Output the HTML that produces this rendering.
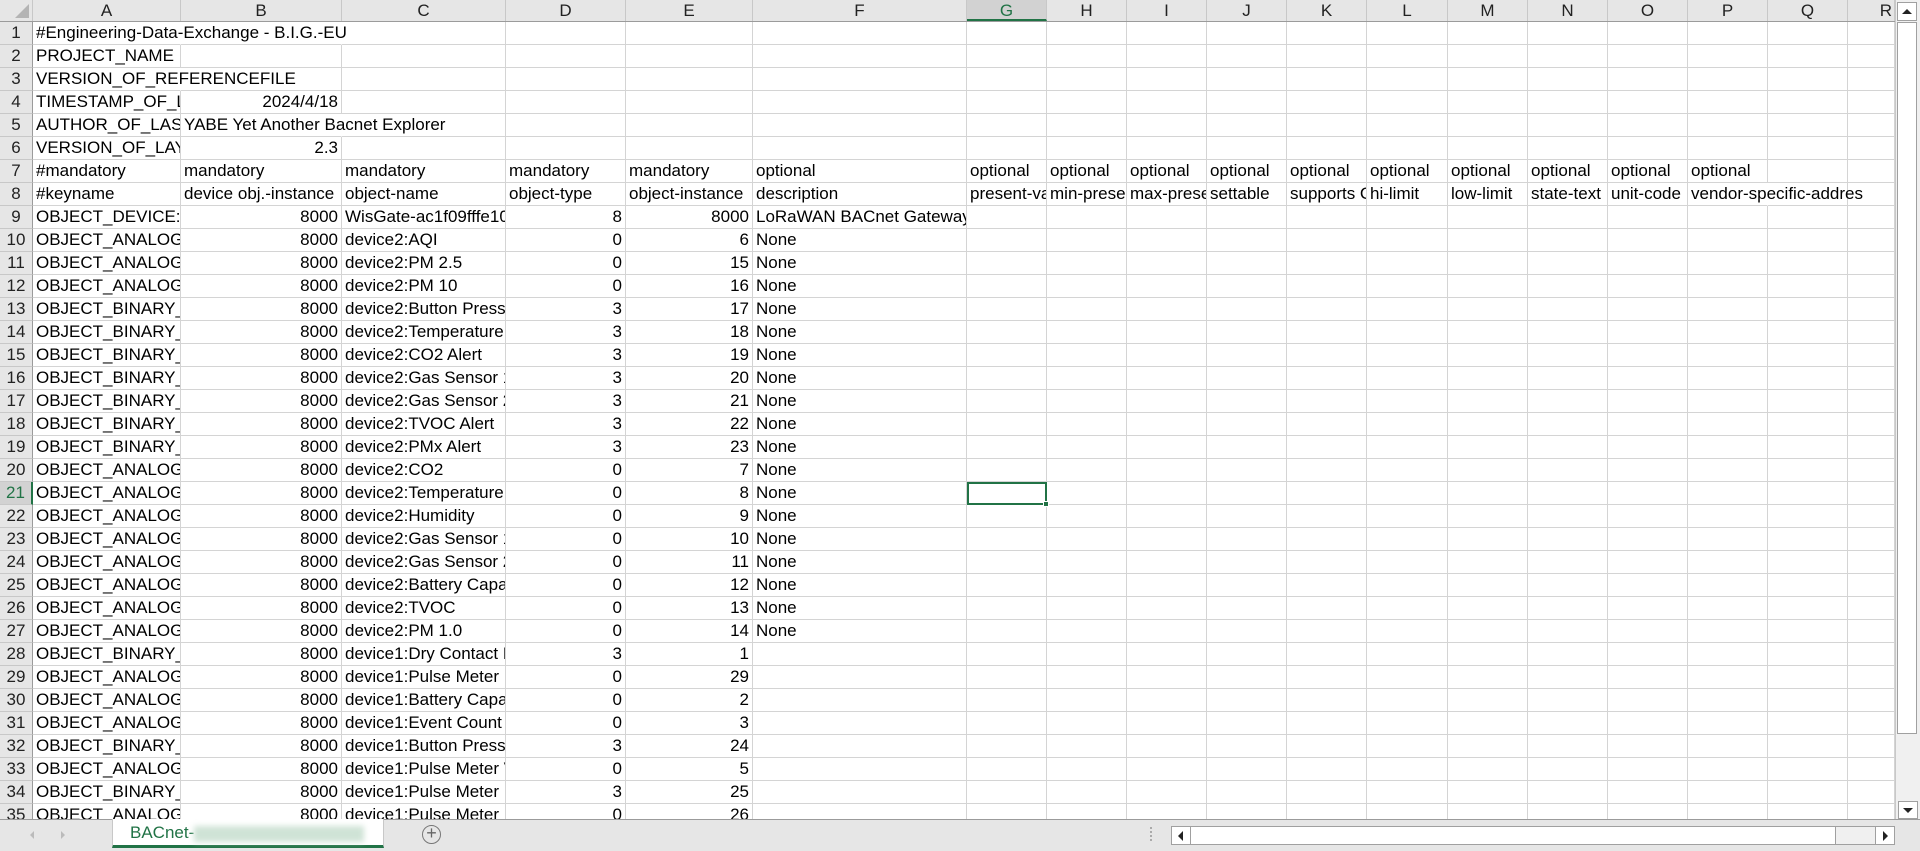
<!DOCTYPE html>
<html><head><meta charset="utf-8"><style>
*{margin:0;padding:0;box-sizing:border-box}
body{width:1920px;height:851px;overflow:hidden;background:#fff;font-family:"Liberation Sans","Noto Sans CJK SC",sans-serif;font-size:17px;color:#000;position:relative}
.hdr{position:absolute;left:0;top:0;height:22px;width:1895px;background:#e6e6e6;border-bottom:1px solid #9b9b9b;display:flex}
.hdr div{height:21px;border-right:1px solid #c8c8c8;text-align:center;line-height:21px;font-size:17px;color:#222}
.hdr .sel{background:#d2d2d2;border-bottom:2px solid #217346;color:#217346}
.grid{position:absolute;left:0;top:22px;width:1895px;height:797px;overflow:hidden}
.r{display:flex;height:23px}
.r>*{flex:none;height:23px;border-right:1px solid #d4d4d4;border-bottom:1px solid #d4d4d4;white-space:nowrap;overflow:hidden;line-height:22px;padding-left:3px}
.r>i{font-style:normal;background:#e6e6e6;border-right:1px solid #9b9b9b;border-bottom:1px solid #c8c8c8;text-align:center;padding:0;color:#222}
.r>.n{text-align:right;padding-right:3px}
.r>.v{overflow:visible;position:relative;z-index:2}
.r>.nb{border-right-color:#fff}
.c0{width:33px}.c1{width:148px}.c2{width:161px}.c3{width:164px}.c4{width:120px}.c5{width:127px}.c6{width:214px}
.g{width:80px}.c18{width:47px}
</style></head><body>
<div class="hdr">
<div style="width:33px;position:relative"><span style="position:absolute;right:3px;bottom:3px;width:0;height:0;border-left:14px solid transparent;border-bottom:14px solid #b4b4b4"></span></div>
<div style="width:148px">A</div><div style="width:161px">B</div><div style="width:164px">C</div><div style="width:120px">D</div><div style="width:127px">E</div><div style="width:214px">F</div>
<div class="sel" style="width:80px">G</div><div style="width:80px">H</div><div style="width:80px">I</div><div style="width:80px">J</div><div style="width:80px">K</div><div style="width:81px">L</div><div style="width:80px">M</div><div style="width:80px">N</div><div style="width:80px">O</div><div style="width:80px">P</div><div style="width:80px">Q</div><div style="width:47px;text-align:right;padding-right:2px">R</div>
</div>
<div class="grid">
<div class="r"><i class="c0">1</i><span class="c1 v nb">#Engineering-Data-Exchange - B.I.G.-EU</span><span class="c2 nb"></span><span class="c3"></span><span class="c4"></span><span class="c5"></span><span class="c6"></span><span class="g"></span><span class="g"></span><span class="g"></span><span class="g"></span><span class="g"></span><span class="g" style="width:81px"></span><span class="g"></span><span class="g"></span><span class="g"></span><span class="g"></span><span class="g"></span><span class="c18"></span></div>
<div class="r"><i class="c0">2</i><span class="c1">PROJECT_NAME</span><span class="c2"></span><span class="c3"></span><span class="c4"></span><span class="c5"></span><span class="c6"></span><span class="g"></span><span class="g"></span><span class="g"></span><span class="g"></span><span class="g"></span><span class="g" style="width:81px"></span><span class="g"></span><span class="g"></span><span class="g"></span><span class="g"></span><span class="g"></span><span class="c18"></span></div>
<div class="r"><i class="c0">3</i><span class="c1 v nb">VERSION_OF_REFERENCEFILE</span><span class="c2"></span><span class="c3"></span><span class="c4"></span><span class="c5"></span><span class="c6"></span><span class="g"></span><span class="g"></span><span class="g"></span><span class="g"></span><span class="g"></span><span class="g" style="width:81px"></span><span class="g"></span><span class="g"></span><span class="g"></span><span class="g"></span><span class="g"></span><span class="c18"></span></div>
<div class="r"><i class="c0">4</i><span class="c1">TIMESTAMP_OF_LAST_CHANGE</span><span class="c2 n">2024/4/18</span><span class="c3"></span><span class="c4"></span><span class="c5"></span><span class="c6"></span><span class="g"></span><span class="g"></span><span class="g"></span><span class="g"></span><span class="g"></span><span class="g" style="width:81px"></span><span class="g"></span><span class="g"></span><span class="g"></span><span class="g"></span><span class="g"></span><span class="c18"></span></div>
<div class="r"><i class="c0">5</i><span class="c1">AUTHOR_OF_LAST_CHANGE</span><span class="c2 v nb">YABE Yet Another Bacnet Explorer</span><span class="c3"></span><span class="c4"></span><span class="c5"></span><span class="c6"></span><span class="g"></span><span class="g"></span><span class="g"></span><span class="g"></span><span class="g"></span><span class="g" style="width:81px"></span><span class="g"></span><span class="g"></span><span class="g"></span><span class="g"></span><span class="g"></span><span class="c18"></span></div>
<div class="r"><i class="c0">6</i><span class="c1">VERSION_OF_LAYOUT</span><span class="c2 n">2.3</span><span class="c3"></span><span class="c4"></span><span class="c5"></span><span class="c6"></span><span class="g"></span><span class="g"></span><span class="g"></span><span class="g"></span><span class="g"></span><span class="g" style="width:81px"></span><span class="g"></span><span class="g"></span><span class="g"></span><span class="g"></span><span class="g"></span><span class="c18"></span></div>
<div class="r"><i class="c0">7</i><span class="c1">#mandatory</span><span class="c2">mandatory</span><span class="c3">mandatory</span><span class="c4">mandatory</span><span class="c5">mandatory</span><span class="c6">optional</span><span class="g">optional</span><span class="g">optional</span><span class="g">optional</span><span class="g">optional</span><span class="g">optional</span><span class="g" style="width:81px">optional</span><span class="g">optional</span><span class="g">optional</span><span class="g">optional</span><span class="g">optional</span><span class="g"></span><span class="c18"></span></div>
<div class="r"><i class="c0">8</i><span class="c1">#keyname</span><span class="c2">device obj.-instance</span><span class="c3">object-name</span><span class="c4">object-type</span><span class="c5">object-instance</span><span class="c6">description</span><span class="g">present-value</span><span class="g">min-present-value</span><span class="g">max-present-value</span><span class="g">settable</span><span class="g">supports COV</span><span class="g" style="width:81px">hi-limit</span><span class="g">low-limit</span><span class="g">state-text</span><span class="g">unit-code</span><span class="g v nb">vendor-specific-addres</span><span class="g"></span><span class="c18"></span></div>
<div class="r"><i class="c0">9</i><span class="c1">OBJECT_DEVICE:8000</span><span class="c2 n">8000</span><span class="c3">WisGate-ac1f09fffe10</span><span class="c4 n">8</span><span class="c5 n">8000</span><span class="c6">LoRaWAN BACnet Gateway</span><span class="g"></span><span class="g"></span><span class="g"></span><span class="g"></span><span class="g"></span><span class="g" style="width:81px"></span><span class="g"></span><span class="g"></span><span class="g"></span><span class="g"></span><span class="g"></span><span class="c18"></span></div>
<div class="r"><i class="c0">10</i><span class="c1">OBJECT_ANALOG_INPUT</span><span class="c2 n">8000</span><span class="c3">device2:AQI</span><span class="c4 n">0</span><span class="c5 n">6</span><span class="c6">None</span><span class="g"></span><span class="g"></span><span class="g"></span><span class="g"></span><span class="g"></span><span class="g" style="width:81px"></span><span class="g"></span><span class="g"></span><span class="g"></span><span class="g"></span><span class="g"></span><span class="c18"></span></div>
<div class="r"><i class="c0">11</i><span class="c1">OBJECT_ANALOG_INPUT</span><span class="c2 n">8000</span><span class="c3">device2:PM 2.5</span><span class="c4 n">0</span><span class="c5 n">15</span><span class="c6">None</span><span class="g"></span><span class="g"></span><span class="g"></span><span class="g"></span><span class="g"></span><span class="g" style="width:81px"></span><span class="g"></span><span class="g"></span><span class="g"></span><span class="g"></span><span class="g"></span><span class="c18"></span></div>
<div class="r"><i class="c0">12</i><span class="c1">OBJECT_ANALOG_INPUT</span><span class="c2 n">8000</span><span class="c3">device2:PM 10</span><span class="c4 n">0</span><span class="c5 n">16</span><span class="c6">None</span><span class="g"></span><span class="g"></span><span class="g"></span><span class="g"></span><span class="g"></span><span class="g" style="width:81px"></span><span class="g"></span><span class="g"></span><span class="g"></span><span class="g"></span><span class="g"></span><span class="c18"></span></div>
<div class="r"><i class="c0">13</i><span class="c1">OBJECT_BINARY_INPUT</span><span class="c2 n">8000</span><span class="c3">device2:Button Pressed</span><span class="c4 n">3</span><span class="c5 n">17</span><span class="c6">None</span><span class="g"></span><span class="g"></span><span class="g"></span><span class="g"></span><span class="g"></span><span class="g" style="width:81px"></span><span class="g"></span><span class="g"></span><span class="g"></span><span class="g"></span><span class="g"></span><span class="c18"></span></div>
<div class="r"><i class="c0">14</i><span class="c1">OBJECT_BINARY_INPUT</span><span class="c2 n">8000</span><span class="c3">device2:Temperature</span><span class="c4 n">3</span><span class="c5 n">18</span><span class="c6">None</span><span class="g"></span><span class="g"></span><span class="g"></span><span class="g"></span><span class="g"></span><span class="g" style="width:81px"></span><span class="g"></span><span class="g"></span><span class="g"></span><span class="g"></span><span class="g"></span><span class="c18"></span></div>
<div class="r"><i class="c0">15</i><span class="c1">OBJECT_BINARY_INPUT</span><span class="c2 n">8000</span><span class="c3">device2:CO2 Alert</span><span class="c4 n">3</span><span class="c5 n">19</span><span class="c6">None</span><span class="g"></span><span class="g"></span><span class="g"></span><span class="g"></span><span class="g"></span><span class="g" style="width:81px"></span><span class="g"></span><span class="g"></span><span class="g"></span><span class="g"></span><span class="g"></span><span class="c18"></span></div>
<div class="r"><i class="c0">16</i><span class="c1">OBJECT_BINARY_INPUT</span><span class="c2 n">8000</span><span class="c3">device2:Gas Sensor 1</span><span class="c4 n">3</span><span class="c5 n">20</span><span class="c6">None</span><span class="g"></span><span class="g"></span><span class="g"></span><span class="g"></span><span class="g"></span><span class="g" style="width:81px"></span><span class="g"></span><span class="g"></span><span class="g"></span><span class="g"></span><span class="g"></span><span class="c18"></span></div>
<div class="r"><i class="c0">17</i><span class="c1">OBJECT_BINARY_INPUT</span><span class="c2 n">8000</span><span class="c3">device2:Gas Sensor 2</span><span class="c4 n">3</span><span class="c5 n">21</span><span class="c6">None</span><span class="g"></span><span class="g"></span><span class="g"></span><span class="g"></span><span class="g"></span><span class="g" style="width:81px"></span><span class="g"></span><span class="g"></span><span class="g"></span><span class="g"></span><span class="g"></span><span class="c18"></span></div>
<div class="r"><i class="c0">18</i><span class="c1">OBJECT_BINARY_INPUT</span><span class="c2 n">8000</span><span class="c3">device2:TVOC Alert</span><span class="c4 n">3</span><span class="c5 n">22</span><span class="c6">None</span><span class="g"></span><span class="g"></span><span class="g"></span><span class="g"></span><span class="g"></span><span class="g" style="width:81px"></span><span class="g"></span><span class="g"></span><span class="g"></span><span class="g"></span><span class="g"></span><span class="c18"></span></div>
<div class="r"><i class="c0">19</i><span class="c1">OBJECT_BINARY_INPUT</span><span class="c2 n">8000</span><span class="c3">device2:PMx Alert</span><span class="c4 n">3</span><span class="c5 n">23</span><span class="c6">None</span><span class="g"></span><span class="g"></span><span class="g"></span><span class="g"></span><span class="g"></span><span class="g" style="width:81px"></span><span class="g"></span><span class="g"></span><span class="g"></span><span class="g"></span><span class="g"></span><span class="c18"></span></div>
<div class="r"><i class="c0">20</i><span class="c1">OBJECT_ANALOG_INPUT</span><span class="c2 n">8000</span><span class="c3">device2:CO2</span><span class="c4 n">0</span><span class="c5 n">7</span><span class="c6">None</span><span class="g"></span><span class="g"></span><span class="g"></span><span class="g"></span><span class="g"></span><span class="g" style="width:81px"></span><span class="g"></span><span class="g"></span><span class="g"></span><span class="g"></span><span class="g"></span><span class="c18"></span></div>
<div class="r"><i class="c0" style="background:#d2d2d2;color:#217346;border-right:2px solid #217346">21</i><span class="c1">OBJECT_ANALOG_INPUT</span><span class="c2 n">8000</span><span class="c3">device2:Temperature</span><span class="c4 n">0</span><span class="c5 n">8</span><span class="c6">None</span><span class="g" style="border:2px solid #217346;position:relative;overflow:visible"><span style="position:absolute;right:-4px;bottom:-4px;width:6px;height:6px;background:#217346;border:1px solid #fff"></span></span><span class="g"></span><span class="g"></span><span class="g"></span><span class="g"></span><span class="g" style="width:81px"></span><span class="g"></span><span class="g"></span><span class="g"></span><span class="g"></span><span class="g"></span><span class="c18"></span></div>
<div class="r"><i class="c0">22</i><span class="c1">OBJECT_ANALOG_INPUT</span><span class="c2 n">8000</span><span class="c3">device2:Humidity</span><span class="c4 n">0</span><span class="c5 n">9</span><span class="c6">None</span><span class="g"></span><span class="g"></span><span class="g"></span><span class="g"></span><span class="g"></span><span class="g" style="width:81px"></span><span class="g"></span><span class="g"></span><span class="g"></span><span class="g"></span><span class="g"></span><span class="c18"></span></div>
<div class="r"><i class="c0">23</i><span class="c1">OBJECT_ANALOG_INPUT</span><span class="c2 n">8000</span><span class="c3">device2:Gas Sensor 1</span><span class="c4 n">0</span><span class="c5 n">10</span><span class="c6">None</span><span class="g"></span><span class="g"></span><span class="g"></span><span class="g"></span><span class="g"></span><span class="g" style="width:81px"></span><span class="g"></span><span class="g"></span><span class="g"></span><span class="g"></span><span class="g"></span><span class="c18"></span></div>
<div class="r"><i class="c0">24</i><span class="c1">OBJECT_ANALOG_INPUT</span><span class="c2 n">8000</span><span class="c3">device2:Gas Sensor 2</span><span class="c4 n">0</span><span class="c5 n">11</span><span class="c6">None</span><span class="g"></span><span class="g"></span><span class="g"></span><span class="g"></span><span class="g"></span><span class="g" style="width:81px"></span><span class="g"></span><span class="g"></span><span class="g"></span><span class="g"></span><span class="g"></span><span class="c18"></span></div>
<div class="r"><i class="c0">25</i><span class="c1">OBJECT_ANALOG_INPUT</span><span class="c2 n">8000</span><span class="c3">device2:Battery Capacity</span><span class="c4 n">0</span><span class="c5 n">12</span><span class="c6">None</span><span class="g"></span><span class="g"></span><span class="g"></span><span class="g"></span><span class="g"></span><span class="g" style="width:81px"></span><span class="g"></span><span class="g"></span><span class="g"></span><span class="g"></span><span class="g"></span><span class="c18"></span></div>
<div class="r"><i class="c0">26</i><span class="c1">OBJECT_ANALOG_INPUT</span><span class="c2 n">8000</span><span class="c3">device2:TVOC</span><span class="c4 n">0</span><span class="c5 n">13</span><span class="c6">None</span><span class="g"></span><span class="g"></span><span class="g"></span><span class="g"></span><span class="g"></span><span class="g" style="width:81px"></span><span class="g"></span><span class="g"></span><span class="g"></span><span class="g"></span><span class="g"></span><span class="c18"></span></div>
<div class="r"><i class="c0">27</i><span class="c1">OBJECT_ANALOG_INPUT</span><span class="c2 n">8000</span><span class="c3">device2:PM 1.0</span><span class="c4 n">0</span><span class="c5 n">14</span><span class="c6">None</span><span class="g"></span><span class="g"></span><span class="g"></span><span class="g"></span><span class="g"></span><span class="g" style="width:81px"></span><span class="g"></span><span class="g"></span><span class="g"></span><span class="g"></span><span class="g"></span><span class="c18"></span></div>
<div class="r"><i class="c0">28</i><span class="c1">OBJECT_BINARY_INPUT</span><span class="c2 n">8000</span><span class="c3">device1:Dry Contact In</span><span class="c4 n">3</span><span class="c5 n">1</span><span class="c6"></span><span class="g"></span><span class="g"></span><span class="g"></span><span class="g"></span><span class="g"></span><span class="g" style="width:81px"></span><span class="g"></span><span class="g"></span><span class="g"></span><span class="g"></span><span class="g"></span><span class="c18"></span></div>
<div class="r"><i class="c0">29</i><span class="c1">OBJECT_ANALOG_INPUT</span><span class="c2 n">8000</span><span class="c3">device1:Pulse Meter In</span><span class="c4 n">0</span><span class="c5 n">29</span><span class="c6"></span><span class="g"></span><span class="g"></span><span class="g"></span><span class="g"></span><span class="g"></span><span class="g" style="width:81px"></span><span class="g"></span><span class="g"></span><span class="g"></span><span class="g"></span><span class="g"></span><span class="c18"></span></div>
<div class="r"><i class="c0">30</i><span class="c1">OBJECT_ANALOG_INPUT</span><span class="c2 n">8000</span><span class="c3">device1:Battery Capacity</span><span class="c4 n">0</span><span class="c5 n">2</span><span class="c6"></span><span class="g"></span><span class="g"></span><span class="g"></span><span class="g"></span><span class="g"></span><span class="g" style="width:81px"></span><span class="g"></span><span class="g"></span><span class="g"></span><span class="g"></span><span class="g"></span><span class="c18"></span></div>
<div class="r"><i class="c0">31</i><span class="c1">OBJECT_ANALOG_INPUT</span><span class="c2 n">8000</span><span class="c3">device1:Event Count</span><span class="c4 n">0</span><span class="c5 n">3</span><span class="c6"></span><span class="g"></span><span class="g"></span><span class="g"></span><span class="g"></span><span class="g"></span><span class="g" style="width:81px"></span><span class="g"></span><span class="g"></span><span class="g"></span><span class="g"></span><span class="g"></span><span class="c18"></span></div>
<div class="r"><i class="c0">32</i><span class="c1">OBJECT_BINARY_INPUT</span><span class="c2 n">8000</span><span class="c3">device1:Button Pressed</span><span class="c4 n">3</span><span class="c5 n">24</span><span class="c6"></span><span class="g"></span><span class="g"></span><span class="g"></span><span class="g"></span><span class="g"></span><span class="g" style="width:81px"></span><span class="g"></span><span class="g"></span><span class="g"></span><span class="g"></span><span class="g"></span><span class="c18"></span></div>
<div class="r"><i class="c0">33</i><span class="c1">OBJECT_ANALOG_INPUT</span><span class="c2 n">8000</span><span class="c3">device1:Pulse Meter Value</span><span class="c4 n">0</span><span class="c5 n">5</span><span class="c6"></span><span class="g"></span><span class="g"></span><span class="g"></span><span class="g"></span><span class="g"></span><span class="g" style="width:81px"></span><span class="g"></span><span class="g"></span><span class="g"></span><span class="g"></span><span class="g"></span><span class="c18"></span></div>
<div class="r"><i class="c0">34</i><span class="c1">OBJECT_BINARY_INPUT</span><span class="c2 n">8000</span><span class="c3">device1:Pulse Meter Enable</span><span class="c4 n">3</span><span class="c5 n">25</span><span class="c6"></span><span class="g"></span><span class="g"></span><span class="g"></span><span class="g"></span><span class="g"></span><span class="g" style="width:81px"></span><span class="g"></span><span class="g"></span><span class="g"></span><span class="g"></span><span class="g"></span><span class="c18"></span></div>
<div class="r"><i class="c0">35</i><span class="c1">OBJECT_ANALOG_INPUT</span><span class="c2 n">8000</span><span class="c3">device1:Pulse Meter M</span><span class="c4 n">0</span><span class="c5 n">26</span><span class="c6"></span><span class="g"></span><span class="g"></span><span class="g"></span><span class="g"></span><span class="g"></span><span class="g" style="width:81px"></span><span class="g"></span><span class="g"></span><span class="g"></span><span class="g"></span><span class="g"></span><span class="c18"></span></div>
</div>
<div style="position:absolute;left:1895px;top:0;width:25px;height:819px;background:#f0f0f0;border-left:1px solid #c8c8c8"></div>
<div style="position:absolute;left:1897px;top:2px;width:20px;height:19px;background:#fff;border:1px solid #a0a0a0"><div style="margin:6px auto 0;width:0;height:0;border-left:5px solid transparent;border-right:5px solid transparent;border-bottom:5px solid #222"></div></div>
<div style="position:absolute;left:1897px;top:22px;width:20px;height:712px;background:#fff;border:1px solid #a0a0a0"></div>
<div style="position:absolute;left:1898px;top:801px;width:20px;height:18px;background:#fff;border:1px solid #a0a0a0"><div style="margin:6px auto 0;width:0;height:0;border-left:5px solid transparent;border-right:5px solid transparent;border-top:5px solid #222"></div></div>
<div style="position:absolute;left:0;top:819px;width:1920px;height:32px;background:#e6e6e6;border-top:1px solid #9b9b9b"></div>
<div style="position:absolute;left:30px;top:831px;width:0;height:0;border-top:4px solid transparent;border-bottom:4px solid transparent;border-right:4px solid #bbb"></div>
<div style="position:absolute;left:61px;top:831px;width:0;height:0;border-top:4px solid transparent;border-bottom:4px solid transparent;border-left:4px solid #bbb"></div>
<div style="position:absolute;left:112px;top:819px;width:272px;height:29px;background:#fff;border-bottom:3px solid #217346;border-left:1px solid #c8c8c8;border-right:1px solid #c8c8c8;font-size:17px;line-height:27px;color:#217346;padding-left:17px">BACnet-<span style="display:inline-block;vertical-align:middle;width:170px;height:16px;background:#cfe3d6;filter:blur(3px)"></span></div>
<div style="position:absolute;left:422px;top:825px;width:19px;height:19px;border:1.5px solid #777;border-radius:50%;text-align:center;line-height:15px;font-size:18px;color:#666">+</div>
<div style="position:absolute;left:1150px;top:827px;width:2px;height:14px;border-left:2px dotted #aaa"></div>
<div style="position:absolute;left:1171px;top:826px;width:724px;height:19px;background:#f0f0f0;border:1px solid #a0a0a0"></div>
<div style="position:absolute;left:1171px;top:826px;width:20px;height:19px;background:#fff;border:1px solid #a0a0a0"><div style="margin:4px 0 0 6px;width:0;height:0;border-top:5px solid transparent;border-bottom:5px solid transparent;border-right:5px solid #222"></div></div>
<div style="position:absolute;left:1190px;top:826px;width:646px;height:19px;background:#fff;border:1px solid #a0a0a0"></div>
<div style="position:absolute;left:1875px;top:826px;width:20px;height:19px;background:#fff;border:1px solid #a0a0a0"><div style="margin:4px 0 0 7px;width:0;height:0;border-top:5px solid transparent;border-bottom:5px solid transparent;border-left:5px solid #222"></div></div>
</body></html>
